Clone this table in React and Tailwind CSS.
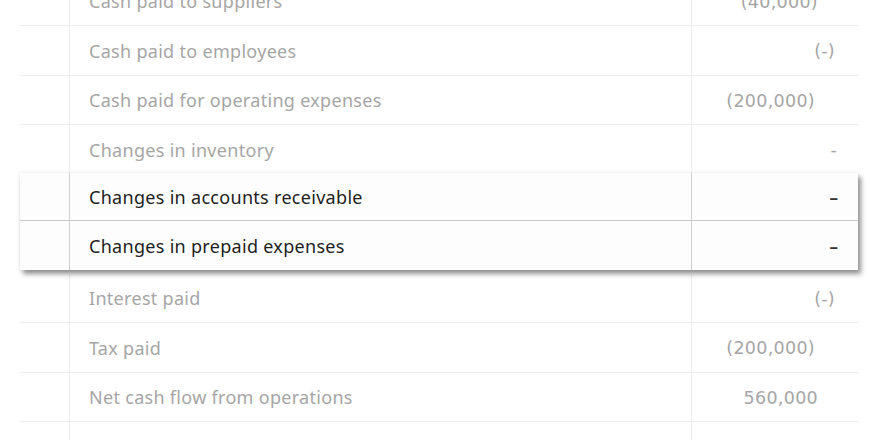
import React from "react";

const labelFont = { fontFamily: '"Noto Sans", "DejaVu Sans", sans-serif' };
const numFont = { fontFamily: '"DejaVu Sans", "Noto Sans", sans-serif' };

function Row({ label, value, pr }) {
  return (
    <div className="grid grid-cols-[50px_622px_1fr] h-[49.5px] border-b border-[#ededed] bg-white">
      <div className="border-r border-[#ededed]" />
      <div className="border-r border-[#ededed] flex items-center pl-[19px] pt-[2px] text-[18px] tracking-[0.3px] text-[#a6a6a6]" style={labelFont}>
        {label}
      </div>
      <div className="flex items-center justify-end pt-[2px] text-[17.5px] tracking-[0.3px] text-[#a6a6a6]" style={{ ...numFont, paddingRight: pr }}>
        {value}
      </div>
    </div>
  );
}

function CardRow({ label, value, h, last }) {
  return (
    <div className={`grid grid-cols-[50px_622px_1fr] ${h} ${last ? "" : "border-b border-[#c8c8c8]"}`}>
      <div className="border-r border-[#cfcfcf]" />
      <div className="border-r border-[#cfcfcf] flex items-center pl-[19px] pt-[2px] text-[18px] tracking-[0.3px] text-[#1e1e1e]" style={labelFont}>
        {label}
      </div>
      <div className="flex items-center justify-end pr-[20px] pt-[2px] text-[17px] font-semibold text-[#333]" style={labelFont}>
        {value}
      </div>
    </div>
  );
}

export default function App() {
  return (
    <div className="w-[880px] h-[440px] overflow-hidden bg-white pl-[20px] pr-[21px]">
      <div className="-mt-[23.5px]">
        <Row label="Cash paid to suppliers" value="(40,000)" pr="41px" />
        <Row label="Cash paid to employees" value="(-)" pr="24px" />
        <Row label="Cash paid for operating expenses" value="(200,000)" pr="44px" />
        <Row label="Changes in inventory" value="-" pr="22px" />
        <div className="relative z-10 -mt-[1.5px] w-[838px] bg-[#fdfdfd] shadow-[0_0_5px_rgba(0,0,0,0.08),3px_4px_5px_rgba(0,0,0,0.42)]">
          <CardRow label="Changes in accounts receivable" value="–" h="h-[48px]" />
          <CardRow label="Changes in prepaid expenses" value="–" h="h-[49px]" last />
        </div>
        <div className="mt-[3.5px]">
          <Row label="Interest paid" value="(-)" pr="24px" />
          <Row label="Tax paid" value="(200,000)" pr="44px" />
          <Row label="Net cash flow from operations" value="560,000" pr="41px" />
          <Row label="" value="" pr="0px" />
        </div>
      </div>
    </div>
  );
}
